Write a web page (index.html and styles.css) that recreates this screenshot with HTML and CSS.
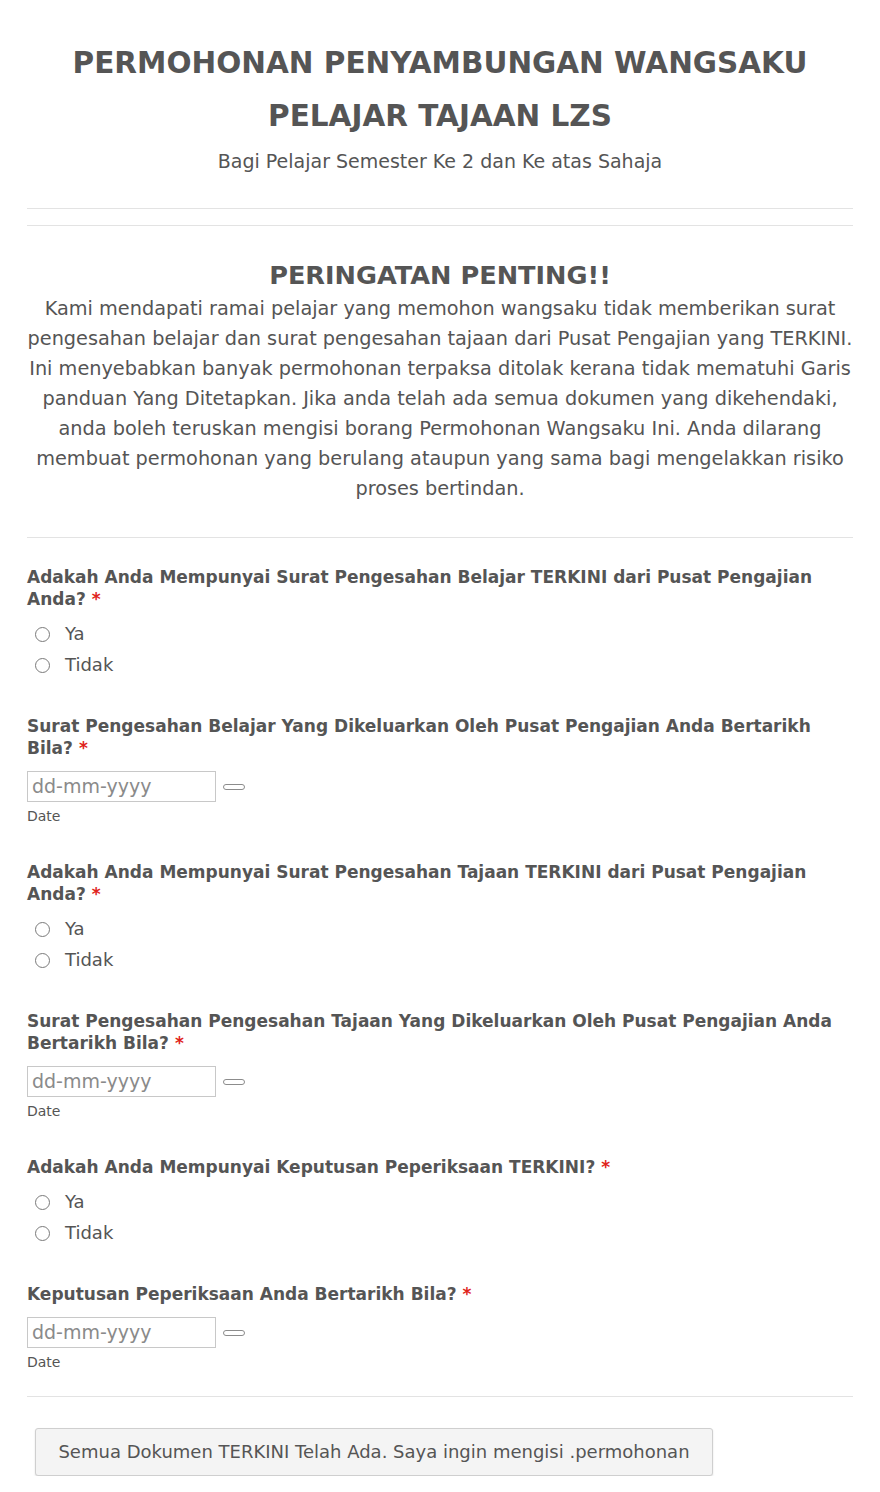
FILE: index.html
```html
<!DOCTYPE html>
<html lang="ms">
<head>
<meta charset="utf-8">
<title>Permohonan Penyambungan Wangsaku</title>
<link rel="stylesheet" href="styles.css">
</head>
<body>
<div class="page">
  <header class="head">
    <h1 class="title">PERMOHONAN PENYAMBUNGAN WANGSAKU PELAJAR TAJAAN LZS</h1>
    <p class="subtitle">Bagi Pelajar Semester Ke 2 dan Ke atas Sahaja</p>
  </header>
  <hr class="rule rule-a">
  <hr class="rule rule-b">
  <section class="notice">
    <h2 class="notice-title">PERINGATAN PENTING!!</h2>
    <p class="notice-text">Kami mendapati ramai pelajar yang memohon wangsaku tidak memberikan surat pengesahan belajar dan surat pengesahan tajaan dari Pusat Pengajian yang TERKINI. Ini menyebabkan banyak permohonan terpaksa ditolak kerana tidak mematuhi Garis panduan Yang Ditetapkan. Jika anda telah ada semua dokumen yang dikehendaki, anda boleh teruskan mengisi borang Permohonan Wangsaku Ini. Anda dilarang membuat permohonan yang berulang ataupun yang sama bagi mengelakkan risiko proses bertindan.</p>
  </section>
  <hr class="rule rule-c">
  <form class="form">
    <div class="field">
      <div class="label">Adakah Anda Mempunyai Surat Pengesahan Belajar TERKINI dari Pusat Pengajian Anda? <span class="req">*</span></div>
      <div class="options">
        <label class="option"><span class="radio"></span>Ya</label>
        <label class="option"><span class="radio"></span>Tidak</label>
      </div>
    </div>
    <div class="field">
      <div class="label">Surat Pengesahan Belajar Yang Dikeluarkan Oleh Pusat Pengajian Anda Bertarikh Bila? <span class="req">*</span></div>
      <div class="date-row"><span class="date-box">dd-mm-yyyy</span><span class="pill"></span></div>
      <div class="hint">Date</div>
    </div>
    <div class="field">
      <div class="label">Adakah Anda Mempunyai Surat Pengesahan Tajaan TERKINI dari Pusat Pengajian Anda? <span class="req">*</span></div>
      <div class="options">
        <label class="option"><span class="radio"></span>Ya</label>
        <label class="option"><span class="radio"></span>Tidak</label>
      </div>
    </div>
    <div class="field">
      <div class="label">Surat Pengesahan Pengesahan Tajaan Yang Dikeluarkan Oleh Pusat Pengajian Anda Bertarikh Bila? <span class="req">*</span></div>
      <div class="date-row"><span class="date-box">dd-mm-yyyy</span><span class="pill"></span></div>
      <div class="hint">Date</div>
    </div>
    <div class="field">
      <div class="label">Adakah Anda Mempunyai Keputusan Peperiksaan TERKINI? <span class="req">*</span></div>
      <div class="options">
        <label class="option"><span class="radio"></span>Ya</label>
        <label class="option"><span class="radio"></span>Tidak</label>
      </div>
    </div>
    <div class="field last">
      <div class="label">Keputusan Peperiksaan Anda Bertarikh Bila? <span class="req">*</span></div>
      <div class="date-row"><span class="date-box">dd-mm-yyyy</span><span class="pill"></span></div>
      <div class="hint">Date</div>
    </div>
  </form>
  <hr class="rule rule-d">
  <div class="actions">
    <span class="button">Semua Dokumen TERKINI Telah Ada. Saya ingin mengisi .permohonan</span>
  </div>
</div>
</body>
</html>
```

FILE: styles.css
```css
html, body {
  margin: 0;
  padding: 0;
  background: #ffffff;
}
body {
  font-family: "DejaVu Sans", "Open Sans", sans-serif;
  color: #555555;
}
.page {
  padding: 0 27px;
}
.head {
  text-align: center;
  padding-top: 37px;
}
.title {
  margin: 0 auto;
  max-width: 760px;
  font-size: 29.5px;
  line-height: 53px;
  font-weight: 700;
  color: #555555;
}
.subtitle {
  margin: 4px 0 0;
  font-size: 19px;
  line-height: 28px;
}
.rule {
  border: 0;
  border-top: 1px solid #e3e3e3;
  margin: 0;
}
.rule-a { margin-top: 33px; }
.rule-b { margin-top: 16px; }
.notice {
  text-align: center;
  padding-top: 30px;
}
.notice-title {
  margin: 0;
  font-size: 25.6px;
  line-height: 38px;
  font-weight: 700;
}
.notice-text {
  margin: 0;
  font-size: 19.3px;
  line-height: 30px;
}
.rule-c { margin-top: 33px; }
.form {
  padding-top: 28px;
}
.field {
  margin-bottom: 35px;
}
.field.last { margin-bottom: 0; }
.label {
  font-size: 17px;
  line-height: 22px;
  font-weight: 700;
}
.req { color: #e0231b; }
.options {
  margin-top: 8px;
  display: flex;
  flex-direction: column;
}
.option {
  display: flex;
  align-items: center;
  height: 31px;
  font-size: 18px;
  padding-left: 8px;
}
.radio {
  width: 13px;
  height: 13px;
  border: 1px solid #7a7a7a;
  border-radius: 50%;
  margin-right: 15px;
  margin-top: 2px;
}
.date-row {
  margin-top: 12px;
  display: flex;
  align-items: center;
}
.date-box {
  box-sizing: border-box;
  width: 189px;
  height: 31px;
  border: 1px solid #c8c8c8;
  padding: 0 4px;
  font-size: 19px;
  line-height: 29px;
  color: #8a8a8a;
}
.pill {
  width: 20px;
  height: 4px;
  border: 1px solid #8c8c8c;
  border-radius: 4px;
  margin-left: 7px;
}
.hint {
  margin-top: 4px;
  font-size: 14px;
  line-height: 20px;
}
.rule-d { margin-top: 24px; }
.actions {
  padding: 31px 8px 0;
}
.button {
  display: inline-block;
  box-sizing: border-box;
  width: 678px;
  height: 48px;
  border: 1px solid #cfcfcf;
  border-radius: 3px;
  background: #f4f4f4;
  box-shadow: 0 1px 2px rgba(0,0,0,0.12);
  text-align: center;
  font-size: 18px;
  line-height: 46px;
  color: #555555;
}
```
